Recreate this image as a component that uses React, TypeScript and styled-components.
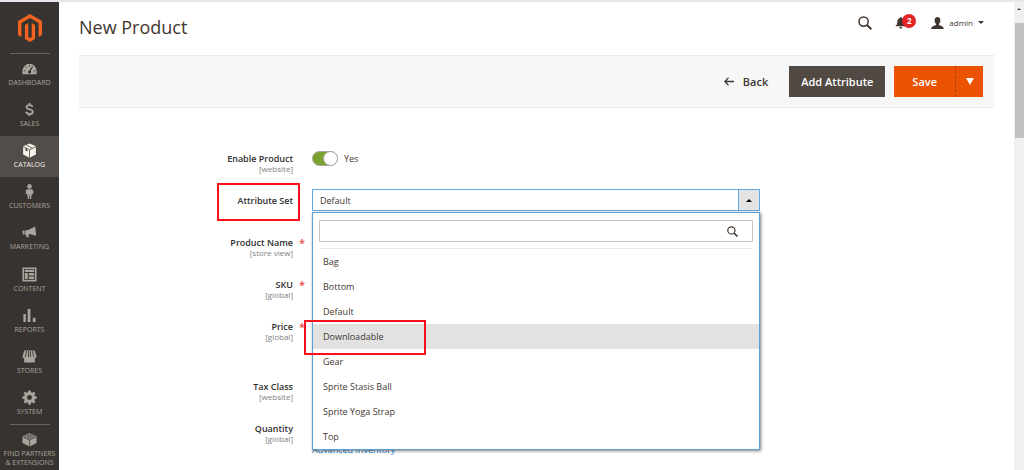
import React from 'react';
import styled, { createGlobalStyle, css } from 'styled-components';

const GlobalStyle = createGlobalStyle`
  *, *::before, *::after { box-sizing: border-box; }
  body {
    margin: 0;
    background: #fff;
    color: #41362f;
    font-family: 'Open Sans', 'Noto Sans', sans-serif;
    font-size: 9px;
    overflow: hidden;
  }
  button, input, select { font: inherit; color: inherit; }
  a { text-decoration: none; }
`;

const Shell = styled.div`
  display: flex;
  height: 100vh;
  border-top: 2px solid #e6e7ec;
  overflow: hidden;
`;

/* ---------- sidebar ---------- */

const Sidebar = styled.nav`
  flex: 0 0 59px;
  display: flex;
  flex-direction: column;
  background: #373330;
`;

const LogoLink = styled.a`
  display: flex;
  justify-content: center;
  height: 51px;
  padding-top: 12px;
`;

const Divider = styled.hr`
  width: 40px;
  height: 1px;
  margin: 0 auto;
  border: 0;
  background: #6a645e;
`;

const Menu = styled.ul`
  flex: 1;
  display: flex;
  flex-direction: column;
  margin: 0;
  padding: 0;
  list-style: none;
`;

const MenuItem = styled.li`
  flex: 1;
  display: flex;
`;

const MenuLink = styled.a<{ $active?: boolean }>`
  flex: 1;
  display: flex;
  flex-direction: column;
  align-items: center;
  padding-top: 7px;
  background: ${(p) => (p.$active ? '#524d49' : 'transparent')};
  color: ${(p) => (p.$active ? '#f7f3eb' : '#aaa49d')};
  font-size: 7px;
  line-height: 9px;
  text-align: center;
  text-transform: uppercase;
  white-space: nowrap;

  svg {
    width: 15px;
    height: 15px;
    margin-bottom: 2px;
    fill: currentColor;
  }
`;

const PartnersLink = styled(MenuLink)`
  flex: 0 0 45px;
  padding-top: 7px;
`;

/* ---------- header ---------- */

const Main = styled.main`
  flex: 1;
  min-width: 0;
  padding: 0 20px;
`;

const Header = styled.header`
  display: flex;
  align-items: center;
  justify-content: space-between;
  height: 53px;
  padding-bottom: 4px;
`;

const Title = styled.h1`
  margin: 0;
  font-size: 18px;
  line-height: 24px;
  font-weight: 400;
`;

const HeaderTools = styled.div`
  display: flex;
  align-items: center;
  padding: 0 10px 8px 0;
`;

const IconButton = styled.button`
  position: relative;
  display: flex;
  padding: 0;
  border: 0;
  background: none;
`;

const NoticeButton = styled(IconButton)`
  margin: 0 23px;
`;

const Badge = styled.span`
  position: absolute;
  left: 7px;
  top: -2px;
  width: 14px;
  height: 14px;
  border-radius: 50%;
  background: #e22626;
  color: #fff;
  font-size: 8px;
  line-height: 14px;
  font-weight: 700;
  text-align: center;
`;

const AccountButton = styled(IconButton)`
  align-items: center;
  gap: 5px;
  font-size: 8px;
  line-height: 12px;
  color: #41362f;
`;

const Caret = styled.span<{ $size: number; $up?: boolean }>`
  display: block;
  width: 0;
  height: 0;
  border: ${(p) => p.$size}px solid transparent;
  ${(p) =>
    p.$up
      ? css`
          border-top: 0;
          border-bottom-color: currentColor;
        `
      : css`
          border-bottom: 0;
          border-top-color: currentColor;
        `}
`;

const SaveCaret = styled(Caret)`
  border-top-width: 7px;
`;

const ActionBar = styled.div`
  display: flex;
  align-items: center;
  justify-content: flex-end;
  height: 53px;
  padding-right: 11px;
  border: 1px solid #ebebeb;
  border-width: 1px 0;
  background: #f7f7f7;
`;

const ActionButton = styled.button<{ $tone?: 'dark' | 'orange' }>`
  display: flex;
  align-items: center;
  justify-content: center;
  gap: 9px;
  height: 31px;
  padding: 0 12px;
  border: 0;
  background: ${(p) => (p.$tone === 'dark' ? '#514943' : p.$tone === 'orange' ? '#eb5202' : 'transparent')};
  color: ${(p) => (p.$tone ? '#fff' : '#41362f')};
  font-size: 11px;
  line-height: 16px;
  font-weight: 600;
  white-space: nowrap;
`;

const BackButton = styled(ActionButton)`
  margin-right: 9px;
`;

const SplitButton = styled.div`
  display: flex;
  margin-left: 9px;
`;

const SaveButton = styled(ActionButton)`
  padding: 0 18px;
`;

const SaveToggle = styled(ActionButton)`
  width: 28px;
  padding: 0;
  border-left: 1px dashed #b84002;
`;

/* ---------- form ---------- */

const Form = styled.form`
  padding-top: 39px;
`;

const Row = styled.div<{ $tall?: boolean }>`
  display: grid;
  grid-template-columns: 214fr 448fr 215fr;
  column-gap: 19px;
  height: ${(p) => (p.$tall ? 60 : 42)}px;
`;

const LabelCell = styled.div`
  position: relative;
  display: flex;
  flex-direction: column;
  align-items: flex-end;
  padding-top: 5px;
`;

const Label = styled.label`
  line-height: 13px;
  font-weight: 600;
  color: #303030;
  white-space: nowrap;
`;

const Scope = styled.span`
  font-size: 8px;
  line-height: 8px;
  color: #808080;
`;

const Required = styled.span`
  position: absolute;
  right: -12px;
  top: 5px;
  font-size: 11px;
  line-height: 14px;
  font-weight: 600;
  color: #e8483f;
`;

const Highlight = styled.span`
  position: absolute;
  border: 2px solid #fb0f18;
  pointer-events: none;
`;

const LabelHighlight = styled(Highlight)`
  right: -7px;
  top: -6px;
  width: 83px;
  height: 38px;
`;

const OptionHighlight = styled(Highlight)`
  left: -9px;
  top: -4px;
  width: 122px;
  height: 35px;
`;

const Field = styled.div`
  position: relative;
  min-width: 0;
`;

const TextInput = styled.input`
  display: block;
  width: 100%;
  height: 22px;
  padding: 0 7px;
  border: 1px solid #adadad;
  background: #fff;
`;

const SwitchLabel = styled.label`
  display: flex;
  align-items: center;
  gap: 6px;
  height: 22px;
`;

const Switch = styled.input`
  appearance: none;
  display: flex;
  justify-content: flex-end;
  width: 26px;
  height: 15px;
  margin: 0;
  border: 1px solid #a9a59f;
  border-radius: 8px;
  background: #79a22e;

  &::before {
    content: '';
    width: 15px;
    height: 15px;
    margin: -1px;
    border: 1px solid #aaa6a0;
    border-radius: 50%;
    background: #fff;
  }
`;

const SelectBox = styled.div`
  display: flex;
  height: 22px;
  border: 1px solid #64a9e2;
`;

const Select = styled.select`
  appearance: none;
  flex: 1;
  min-width: 0;
  padding: 0 7px;
  border: 0;
  background: #fff;
`;

const SelectToggle = styled.button`
  display: flex;
  align-items: center;
  justify-content: center;
  width: 21px;
  padding: 0;
  border: 0;
  border-left: 1px solid #64a9e2;
  background: #e3e3e3;
  color: #000;
`;

const Dropdown = styled.div`
  position: absolute;
  z-index: 1;
  left: 0;
  right: 0;
  top: 23px;
  padding-top: 7px;
  border: 1px solid #5a9fd6;
  background: #fff;
  box-shadow: 1px 1px 3px rgba(0, 0, 0, 0.5);
`;

const SearchRow = styled.div`
  display: flex;
  align-items: center;
  height: 22px;
  margin: 0 6px 6px;
  padding-right: 14px;
  border: 1px solid #c2c2c2;
  border-radius: 1px;
`;

const SearchInput = styled.input`
  flex: 1;
  min-width: 0;
  height: 20px;
  border: 0;
  outline: 0;
  background: none;
`;

const Options = styled.ul`
  margin: 0 6px;
  padding: 0;
  border-top: 1px solid #e8e8e8;
  list-style: none;
`;

const Option = styled.li<{ $hovered?: boolean }>`
  position: relative;
  margin: 0 -6px;
  padding: 0 10px;
  background: ${(p) => (p.$hovered ? '#e2e2e2' : 'transparent')};
  line-height: 25px;
`;

const InventoryLink = styled.a`
  display: block;
  padding-top: 4px;
  line-height: 14px;
  color: #2f7fc4;
`;

/* ---------- browser scroll bar ---------- */

const ScrollTrack = styled.div`
  flex: 0 0 10px;
  display: flex;
  flex-direction: column;
  align-items: center;
  padding-top: 6px;
  background: #f0f0f0;
  color: #505050;
`;

const ScrollThumb = styled.div`
  width: 9px;
  height: 115px;
  margin-top: 13px;
  background: #c1c1c1;
`;

/* ---------- icons ---------- */

const Magnifier = ({ size }: { size: number }) => (
  <svg width={size} height={size} viewBox="0 0 14 14" fill="none" stroke="#41362f" aria-hidden="true">
    <circle cx="5.6" cy="5.6" r="4.6" strokeWidth="1.5" />
    <path d="M9 9l4.3 4.3" strokeWidth="2" />
  </svg>
);

const Logo = () => (
  <svg width="24" height="28" viewBox="0 0 24 28" fill="#f26322" aria-hidden="true">
    <path d="M12 0L0 7v14l3.4 2V9L12 4l8.600 5v14l3.400-2V7z" />
    <path d="M13.700 23l-1.700 1-1.700-1V9L6.900 11v14L12 28l5.100-3V11l-3.400-2z" />
  </svg>
);

const icons: Record<string, React.ReactNode> = {
  Dashboard: (
    <svg viewBox="0 0 16 16" aria-hidden="true">
      <path
        fillRule="evenodd"
        d="M8 3a7.600 7.600 0 0 0-7.600 7.600V14h15.200v-3.400A7.600 7.600 0 0 0 8 3zM7.500 4.300h1v1.500h-1zM2 9.800h1.500v1H2zM12.500 9.800H14v1h-1.500zM3.400 6.300l.7-.7 1 1-.7.7zM10.900 5.700l.9.500L9.300 10.500a1.700 1.700 0 1 1-1.500-.5z"
      />
    </svg>
  ),
  Sales: (
    <svg viewBox="0 0 16 16" aria-hidden="true">
      <path
        fill="none"
        stroke="currentColor"
        strokeWidth="2"
        d="M11.300 5.200C10.800 3.900 9.500 3.300 8 3.300c-1.900 0-3.200.9-3.200 2.300C4.800 8.700 11.500 7 11.500 10.300c0 1.500-1.500 2.400-3.500 2.400-1.800 0-3.200-.8-3.600-2.300M8 1v2.500M8 12.500V15"
      />
    </svg>
  ),
  Catalog: (
    <svg viewBox="0 0 16 16" aria-hidden="true">
      <path d="M8 .5L14.800 3.500V12.300L8 15.700 1.200 12.300V3.500z" />
      <path d="M1.200 4L8 7.200 14.800 4M8 7.200v8.500M4.600 2.200l6.500 3.200" fill="none" stroke="#524d49" strokeWidth=".9" />
      <path d="M3.700 5.200l2 .9v3l-2-.9z" fill="#524d49" />
    </svg>
  ),
  Customers: (
    <svg viewBox="0 0 16 16" aria-hidden="true">
      <circle cx="8" cy="2.600" r="2.500" />
      <path d="M6 5.500h4c1.300 0 2 1 2 2.200v2.800l-1.600.5-.7 5H8.400v-4h-.8v4H6.300l-.7-5L4 10.500V7.700c0-1.200.7-2.200 2-2.200z" />
    </svg>
  ),
  Marketing: (
    <svg viewBox="0 0 16 16" aria-hidden="true">
      <path d="M14 1.500l1.200 10-7.500-1.800-.9.100.8 3.300H5L3.900 10 1 10.200.5 6l6-.8z" />
      <path d="M3 5.300v4.800" stroke="#373330" strokeWidth=".7" />
    </svg>
  ),
  Content: (
    <svg viewBox="0 0 16 16" aria-hidden="true">
      <path fillRule="evenodd" d="M.5.500h15v15H.5zM2.200 2.200v11.600h11.600V2.200z" />
      <path d="M3 3h10v2.300H3zM3 6.300h3.200V13H3zM7.300 6.300H13V9H7.300zM7.300 10H13v3H7.300z" />
    </svg>
  ),
  Reports: (
    <svg viewBox="0 0 16 16" aria-hidden="true">
      <path d="M1.500 6.500h2.600V15H1.500zM6 1h3v14H6zM11.500 10.500h3V15h-3z" />
    </svg>
  ),
  Stores: (
    <svg viewBox="0 0 16 16" aria-hidden="true">
      <path d="M2.500 1.500h11l2 6.500c0 1.300-.8 1.800-1.800 1.800V14.500H2.300V9.800C1.300 9.800.5 9.300.5 8z" />
      <path d="M4.800 2.200L3.600 8.500M7 2.200v6.300M9 2.200v6.300M11.200 2.200l1.200 6.300" stroke="#373330" strokeWidth=".9" />
    </svg>
  ),
  System: (
    <svg viewBox="0 0 16 16" aria-hidden="true">
      <path
        fillRule="evenodd"
        d="M6.800.5h2.400l.4 2 1.300.5 1.700-1.200 1.700 1.700L13.100 5.200l.5 1.300 2 .4v2.300l-2 .4-.5 1.300 1.200 1.700-1.700 1.700-1.700-1.200-1.300.5-.4 2H6.800l-.4-2-1.300-.5-1.700 1.200-1.700-1.700 1.200-1.700-.5-1.300-2-.4V6.900l2-.4.5-1.300-1.200-1.700 1.700-1.700L5.100 3l1.300-.5zM8 5.400a2.600 2.600 0 1 0 0 5.200 2.600 2.600 0 0 0 0-5.200z"
      />
    </svg>
  ),
};

const PartnersIcon = () => (
  <svg viewBox="0 0 16 16" aria-hidden="true">
    <path d="M8 1l7.500 3.500v7.300L8 15.500.5 11.800V4.500z" />
    <g fill="none" stroke="#373330" strokeWidth=".7">
      <path d="M.8 5.200L8 8.700l7.200-3.500M8 8.700v6.500" />
      <ellipse cx="8" cy="2.900" rx="1.900" ry="1" />
      <ellipse cx="4.500" cy="4.700" rx="1.900" ry="1" />
      <ellipse cx="11.500" cy="4.700" rx="1.900" ry="1" />
      <ellipse cx="8" cy="6.400" rx="1.900" ry="1" />
    </g>
  </svg>
);

const BellIcon = () => (
  <svg width="13" height="13" viewBox="0 0 13 13" fill="#41362f" aria-hidden="true">
    <path d="M5 1.200h1.600v.7C8.500 2.300 9.300 4 9.300 6c0 2 .5 3 2 4.300H.3C1.800 9 2.300 8 2.300 6c0-2 .8-3.700 2.700-4.100zM4.400 11h2.800c0 1-.6 1.500-1.400 1.500S4.400 12 4.400 11z" />
  </svg>
);

const UserIcon = () => (
  <svg width="13" height="12" viewBox="0 0 13 12" fill="#41362f" aria-hidden="true">
    <path d="M6.500 0C8.400 0 9.400 1.300 9.400 3.200c0 1.600-.6 3-1.500 3.700v1c1.500.9 4.900.9 4.900 4.100H.2c0-3.200 3.400-3.200 4.900-4.100v-1C4.200 6.200 3.600 4.800 3.600 3.200 3.600 1.300 4.600 0 6.500 0z" />
  </svg>
);

const BackArrow = () => (
  <svg width="10" height="9" viewBox="0 0 10 9" fill="none" stroke="#41362f" strokeWidth="1.300" aria-hidden="true">
    <path d="M4.500.6L.9 4.500l3.600 3.900M1 4.500h9" />
  </svg>
);

/* ---------- page ---------- */

const optionNames = ['Bag', 'Bottom', 'Default', 'Downloadable', 'Gear', 'Sprite Stasis Ball', 'Sprite Yoga Strap', 'Top'];

type FieldLabelProps = { id: string; text: string; scope?: string; required?: boolean; children?: React.ReactNode };

const FieldLabel = ({ id, text, scope, required, children }: FieldLabelProps) => (
  <LabelCell>
    <Label htmlFor={id}>{text}</Label>
    {scope && <Scope>[{scope}]</Scope>}
    {required && <Required>*</Required>}
    {children}
  </LabelCell>
);

export default function App() {
  return (
    <>
      <GlobalStyle />
      <Shell>
        <Sidebar>
          <LogoLink href="#" aria-label="Magento">
            <Logo />
          </LogoLink>
          <Divider />
          <Menu>
            {Object.entries(icons).map(([name, icon]) => (
              <MenuItem key={name}>
                <MenuLink href="#" $active={name === 'Catalog'}>
                  {icon}
                  {name}
                </MenuLink>
              </MenuItem>
            ))}
          </Menu>
          <Divider />
          <PartnersLink href="#">
            <PartnersIcon />
            Find Partners
            <br />
            &amp; Extensions
          </PartnersLink>
        </Sidebar>

        <Main>
          <Header>
            <Title>New Product</Title>
            <HeaderTools>
              <IconButton type="button" aria-label="Search">
                <Magnifier size={14} />
              </IconButton>
              <NoticeButton type="button" aria-label="Notifications">
                <BellIcon />
                <Badge>2</Badge>
              </NoticeButton>
              <AccountButton type="button">
                <UserIcon />
                admin
                <Caret $size={3} />
              </AccountButton>
            </HeaderTools>
          </Header>

          <ActionBar>
            <BackButton type="button">
              <BackArrow />
              Back
            </BackButton>
            <ActionButton type="button" $tone="dark">
              Add Attribute
            </ActionButton>
            <SplitButton>
              <SaveButton type="button" $tone="orange">
                Save
              </SaveButton>
              <SaveToggle type="button" $tone="orange" aria-label="More save options">
                <SaveCaret $size={4} />
              </SaveToggle>
            </SplitButton>
          </ActionBar>

          <Form>
            <Row>
              <FieldLabel id="enabled" text="Enable Product" scope="website" />
              <Field>
                <SwitchLabel>
                  <Switch id="enabled" type="checkbox" defaultChecked />
                  Yes
                </SwitchLabel>
              </Field>
            </Row>
            <Row>
              <FieldLabel id="attribute-set" text="Attribute Set">
                <LabelHighlight />
              </FieldLabel>
              <Field>
                <SelectBox>
                  <Select id="attribute-set" defaultValue="Default">
                    <option>Default</option>
                  </Select>
                  <SelectToggle type="button" aria-label="Close list">
                    <Caret $size={3} $up />
                  </SelectToggle>
                </SelectBox>
                <Dropdown>
                  <SearchRow>
                    <SearchInput type="text" aria-label="Search attribute sets" />
                    <Magnifier size={11} />
                  </SearchRow>
                  <Options role="listbox" aria-label="Attribute sets">
                    {optionNames.map((name) => (
                      <Option key={name} role="option" $hovered={name === 'Downloadable'}>
                        {name}
                        {name === 'Downloadable' && <OptionHighlight />}
                      </Option>
                    ))}
                  </Options>
                </Dropdown>
              </Field>
            </Row>
            <Row>
              <FieldLabel id="name" text="Product Name" scope="store view" required />
              <Field>
                <TextInput id="name" type="text" />
              </Field>
            </Row>
            <Row>
              <FieldLabel id="sku" text="SKU" scope="global" required />
              <Field>
                <TextInput id="sku" type="text" />
              </Field>
            </Row>
            <Row $tall>
              <FieldLabel id="price" text="Price" scope="global" required />
              <Field>
                <TextInput id="price" type="text" />
              </Field>
            </Row>
            <Row>
              <FieldLabel id="tax" text="Tax Class" scope="website" />
              <Field>
                <TextInput id="tax" type="text" />
              </Field>
            </Row>
            <Row>
              <FieldLabel id="quantity" text="Quantity" scope="global" />
              <Field>
                <TextInput id="quantity" type="text" />
                <InventoryLink href="#">Advanced Inventory</InventoryLink>
              </Field>
            </Row>
          </Form>
        </Main>

        <ScrollTrack aria-hidden="true">
          <Caret $size={2} $up />
          <ScrollThumb />
        </ScrollTrack>
      </Shell>
    </>
  );
}
